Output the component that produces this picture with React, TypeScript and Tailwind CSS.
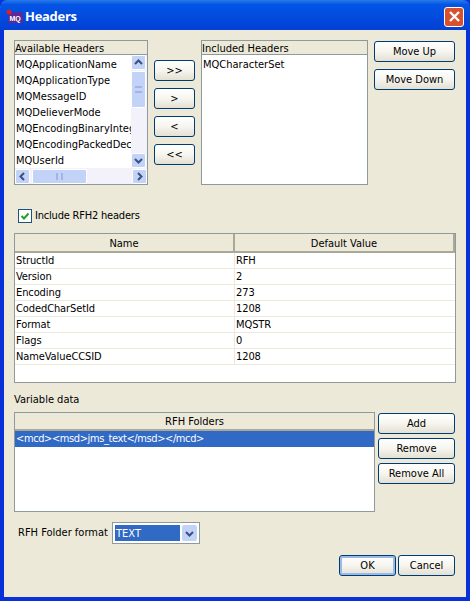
const font = "[font-family:'DejaVu_Sans_Condensed','Liberation_Sans',sans-serif]"

const rows = [
  ['StructId', 'RFH'],
  ['Version', '2'],
  ['Encoding', '273'],
  ['CodedCharSetId', '1208'],
  ['Format', 'MQSTR'],
  ['Flags', '0'],
  ['NameValueCCSID', '1208'],
]

const available = [
  'MQApplicationName',
  'MQApplicationType',
  'MQMessageID',
  'MQDelieverMode',
  'MQEncodingBinaryInteger',
  'MQEncodingPackedDecimal',
  'MQUserId',
]

function Btn({ label, className = '' }: { label: string; className?: string }) {
  return (
    <button className={`h-[21px] rounded-[3px] border border-[#003c74] bg-gradient-to-b from-white via-[#f6f5ef] to-[#e3e0d3] text-[11px] leading-[19px] text-black ${className}`}>
      {label}
    </button>
  )
}

function Chevron({ dir }: { dir: 'up' | 'down' | 'left' | 'right' }) {
  const d = {
    up: 'M3 8 L6.5 4.5 L10 8',
    down: 'M3 5 L6.5 8.5 L10 5',
    left: 'M8 3 L4.5 6.5 L8 10',
    right: 'M5 3 L8.5 6.5 L5 10',
  }[dir]
  return (
    <svg width="13" height="13" viewBox="0 0 13 13" fill="none">
      <path d={d} stroke="#39527f" strokeWidth="2" />
    </svg>
  )
}

function ScrollBtn({ dir }: { dir: 'up' | 'down' | 'left' | 'right' }) {
  return (
    <div className="w-[15px] h-[15px] shrink-0 flex items-center justify-center rounded-[2px] border border-white bg-[#c3d3f7]">
      <Chevron dir={dir} />
    </div>
  )
}

export default function App() {
  return (
    <div className={`w-[470px] h-[601px] flex flex-col bg-[#0831d9] overflow-hidden ${font}`}>
      <div className="h-[30px] shrink-0 rounded-t-[7px] bg-gradient-to-b from-[#2a7be8] from-[0%] via-[#0355e6] via-[15%] to-[#0340d4] flex items-center pt-[3px] pl-[6px] pr-[6px]">
        <svg width="17" height="15" viewBox="0 0 17 15" className="shrink-0">
          <rect x="2" y="3" width="15" height="11" fill="#5b2a94" />
          <circle cx="3" cy="3" r="2.5" fill="#d8202c" />
          <text x="3.5" y="12" fontSize="7" fontWeight="700" fill="white" fontFamily="'Liberation Sans', sans-serif">MQ</text>
        </svg>
        <span className="ml-[2px] text-[13px] font-bold tracking-[-0.3px] text-white [font-family:'Open_Sans',sans-serif]">Headers</span>
        <div className="ml-auto w-[20px] h-[20px] rounded-[3px] border border-white bg-[#d8512f] flex items-center justify-center">
          <svg width="13" height="13" viewBox="0 0 13 13">
            <path d="M2 2 L11 11 M11 2 L2 11" stroke="white" strokeWidth="2.4" />
          </svg>
        </div>
      </div>

      <div className="flex-1 mx-[4px] mb-[4px] bg-[#ece9d8] pl-[10px] pt-[10px] text-[11px] text-black">
        <div className="flex h-[145px]">
          <div className="w-[134px] border border-[#8f9a9c] flex flex-col">
            <div className="h-[14px] leading-[16px] border-b border-[#8f9a9c]">Available Headers</div>
            <div className="flex-1 bg-white flex flex-col min-h-0">
              <div className="flex flex-1 min-h-0">
                <div className="w-[116px] overflow-hidden pl-[1px] pt-[1px]">
                  {available.map(h => (
                    <div key={h} className="h-[16px] leading-[18px] whitespace-nowrap">{h}</div>
                  ))}
                </div>
                <div className="w-[16px] bg-[#f3f2fb] flex flex-col">
                  <ScrollBtn dir="up" />
                  <div className="mt-[1px] h-[37px] w-[15px] rounded-[2px] border border-white bg-[#c3d3f7] flex items-center justify-center">
                    <div className="w-[7px] h-[7px] border-y-2 border-[#a0b4e6]" />
                  </div>
                  <div className="flex-1" />
                  <ScrollBtn dir="down" />
                </div>
              </div>
              <div className="h-[16px] bg-[#f3f2fb] flex items-center">
                <ScrollBtn dir="left" />
                <div className="ml-[2px] h-[15px] w-[55px] rounded-[2px] border border-white bg-[#c3d3f7] flex items-center justify-center">
                  <div className="w-[7px] h-[7px] border-x-2 border-[#a0b4e6]" />
                </div>
                <div className="flex-1" />
                <ScrollBtn dir="right" />
              </div>
            </div>
          </div>

          <div className="w-[41px] ml-[6px] pt-[20px] flex flex-col gap-[7px]">
            <Btn label=">>" />
            <Btn label=">" />
            <Btn label="<" />
            <Btn label="<<" />
          </div>

          <div className="w-[167px] ml-[6px] border border-[#8f9a9c] flex flex-col">
            <div className="h-[14px] leading-[16px] border-b border-[#8f9a9c]">Included Headers</div>
            <div className="flex-1 bg-white pl-[1px] pt-[1px] leading-[18px]">MQCharacterSet</div>
          </div>

          <div className="w-[81px] ml-[6px] pt-[1px] flex flex-col gap-[7px]">
            <Btn label="Move Up" />
            <Btn label="Move Down" />
          </div>
        </div>

        <label className="mt-[24px] ml-[4px] h-[14px] flex items-center gap-[3px]">
          <span className="w-[14px] h-[14px] border border-[#1c5180] bg-white flex items-center justify-center">
            <svg width="10" height="10" viewBox="0 0 10 10" fill="none">
              <path d="M1.5 5 L4 7.5 L8.5 2.5" stroke="#21a121" strokeWidth="2" />
            </svg>
          </span>
          <span className="pt-[1px] tracking-[-0.2px]">Include RFH2 headers</span>
        </label>

        <div className="mt-[10px] w-[442px] h-[150px] border border-[#8f9a9c] bg-white">
          <div className="flex h-[19px] bg-[#ece9d8] border-b-2 border-[#aca899] text-center leading-[19px]">
            <div className="w-[220px] border-r-2 border-[#aca899]">Name</div>
            <div className="flex-1 border-r-2 border-[#aca899]">Default Value</div>
          </div>
          {rows.map(([name, value]) => (
            <div key={name} className="flex h-[16px] border-b border-[#ece9d8] leading-[16px] tracking-[-0.1px]">
              <div className="w-[220px] pl-[1px] border-r border-[#ece9d8]">{name}</div>
              <div className="pl-[1px]">{value}</div>
            </div>
          ))}
        </div>

        <div className="mt-[9px] h-[14px] leading-[16px]">Variable data</div>

        <div className="mt-[6px] flex h-[100px]">
          <div className="w-[361px] border border-[#8f9a9c] bg-white">
            <div className="h-[18px] bg-[#ece9d8] border-b-2 border-[#aca899] text-center leading-[17px]">RFH Folders</div>
            <div className="h-[16px] bg-[#316ac5] text-white pl-[1px] leading-[16px] tracking-[-0.4px]">{'<mcd><msd>jms_text</msd></mcd>'}</div>
          </div>
          <div className="ml-[3px] w-[77px] pt-[1px] flex flex-col gap-[4px]">
            <Btn label="Add" />
            <Btn label="Remove" />
            <Btn label="Remove All" />
          </div>
        </div>

        <div className="mt-[10px] ml-[4px] flex items-center h-[22px]">
          <span className="w-[94px] whitespace-nowrap pt-[1px]">RFH Folder format</span>
          <div className="w-[88px] h-[22px] border border-[#8f9a9c] bg-white p-[2px] flex">
            <div className="flex-1 bg-[#316ac5] text-white pl-[1px] leading-[18px]">TEXT</div>
            <div className="ml-[2px] flex items-center justify-center w-[15px] rounded-[2px] bg-[#c3d3f7]">
              <Chevron dir="down" />
            </div>
          </div>
        </div>

        <div className="mt-[11px] ml-[325px] flex gap-[2px]">
          <Btn label="OK" className="w-[57px] shadow-[inset_0_0_0_2px_#9ab8e8]" />
          <Btn label="Cancel" className="w-[57px]" />
        </div>
      </div>
    </div>
  )
}
